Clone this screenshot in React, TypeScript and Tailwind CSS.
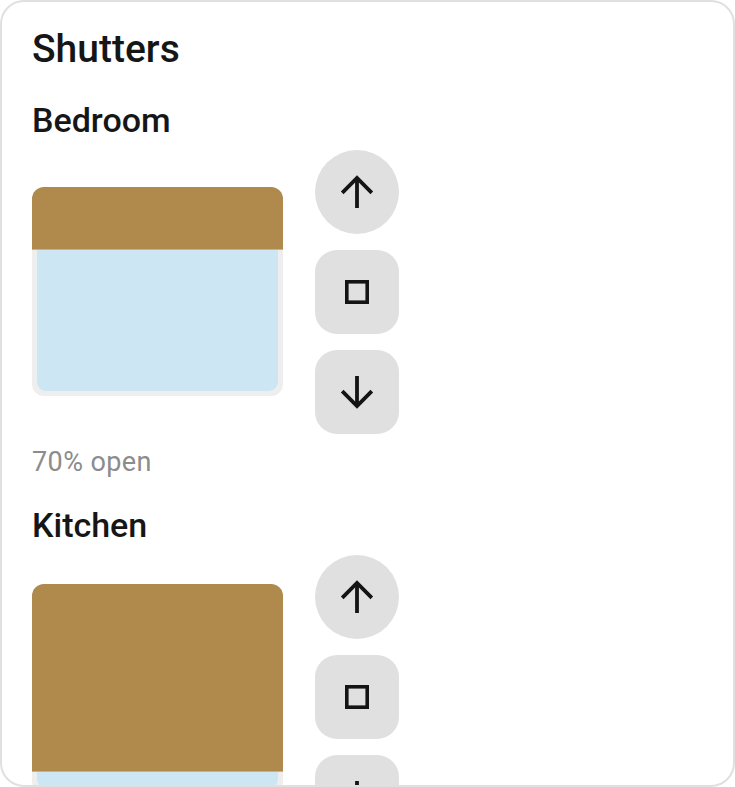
type Shutter = {
  name: string;
  open: number;
};

const shutters: Shutter[] = [
  { name: 'Bedroom', open: 70 },
  { name: 'Kitchen', open: 10 },
];

function ArrowIcon({ down }: { down?: boolean }) {
  return (
    <svg width="36" height="36" viewBox="0 0 36 36" fill="none" className={down ? 'rotate-180' : ''}>
      <path d="M18 4.5V34" stroke="#141414" strokeWidth="3.8" />
      <path d="M3.2 18.8L18 4L32.8 18.8" stroke="#141414" strokeWidth="3.8" />
    </svg>
  );
}

function StopIcon() {
  return (
    <svg width="24" height="24" viewBox="0 0 24 24" fill="none">
      <rect x="1.8" y="1.8" width="20.4" height="20.4" stroke="#141414" strokeWidth="3.6" />
    </svg>
  );
}

function ShutterRow({ shutter, first }: { shutter: Shutter; first: boolean }) {
  const closed = 100 - shutter.open;
  return (
    <section className="flex flex-col">
      <h3 className="text-[34px] font-medium leading-[40px] text-[#161616]">{shutter.name}</h3>
      <div className="mt-[10px] flex items-start gap-8">
        <div
          className={`relative h-[209px] w-[251px] shrink-0 rounded-[12px] bg-[#eeeeee] p-[5px] ${first ? 'mt-[37px]' : 'mt-[29px]'}`}
        >
          <div className="h-full w-full rounded-[9px] bg-[#cce6f4]" />
          <div
            className="absolute left-0 right-0 top-0 rounded-t-[12px] border-b border-[#d0b07c] bg-[#b0894c]"
            style={{ height: `${(closed / 100) * 209}px` }}
          />
        </div>
        <div className="flex flex-col gap-4">
          <button className="flex h-[84px] w-[84px] items-center justify-center rounded-full bg-[#e0e0e0]">
            <ArrowIcon />
          </button>
          <button className="flex h-[84px] w-[84px] items-center justify-center rounded-[22px] bg-[#e0e0e0]">
            <StopIcon />
          </button>
          <button className="flex h-[84px] w-[84px] items-center justify-center rounded-[22px] bg-[#e0e0e0]">
            <ArrowIcon down />
          </button>
        </div>
      </div>
      <p className="mt-[12px] text-[27px] leading-[32px] tracking-[0.4px] text-[#8c8c8c]">{shutter.open}% open</p>
    </section>
  );
}

export default function App() {
  return (
    <div className="flex h-[787px] w-[735px] flex-col gap-[27px] overflow-hidden rounded-[24px] border-2 border-[#e0e0e0] bg-white px-[30px] pt-[23px] font-['Roboto',sans-serif]">
      <h2 className="text-[39px] font-medium leading-[48px] text-[#161616]">Shutters</h2>
      {shutters.map((s, i) => (
        <ShutterRow key={s.name} shutter={s} first={i === 0} />
      ))}
    </div>
  );
}
